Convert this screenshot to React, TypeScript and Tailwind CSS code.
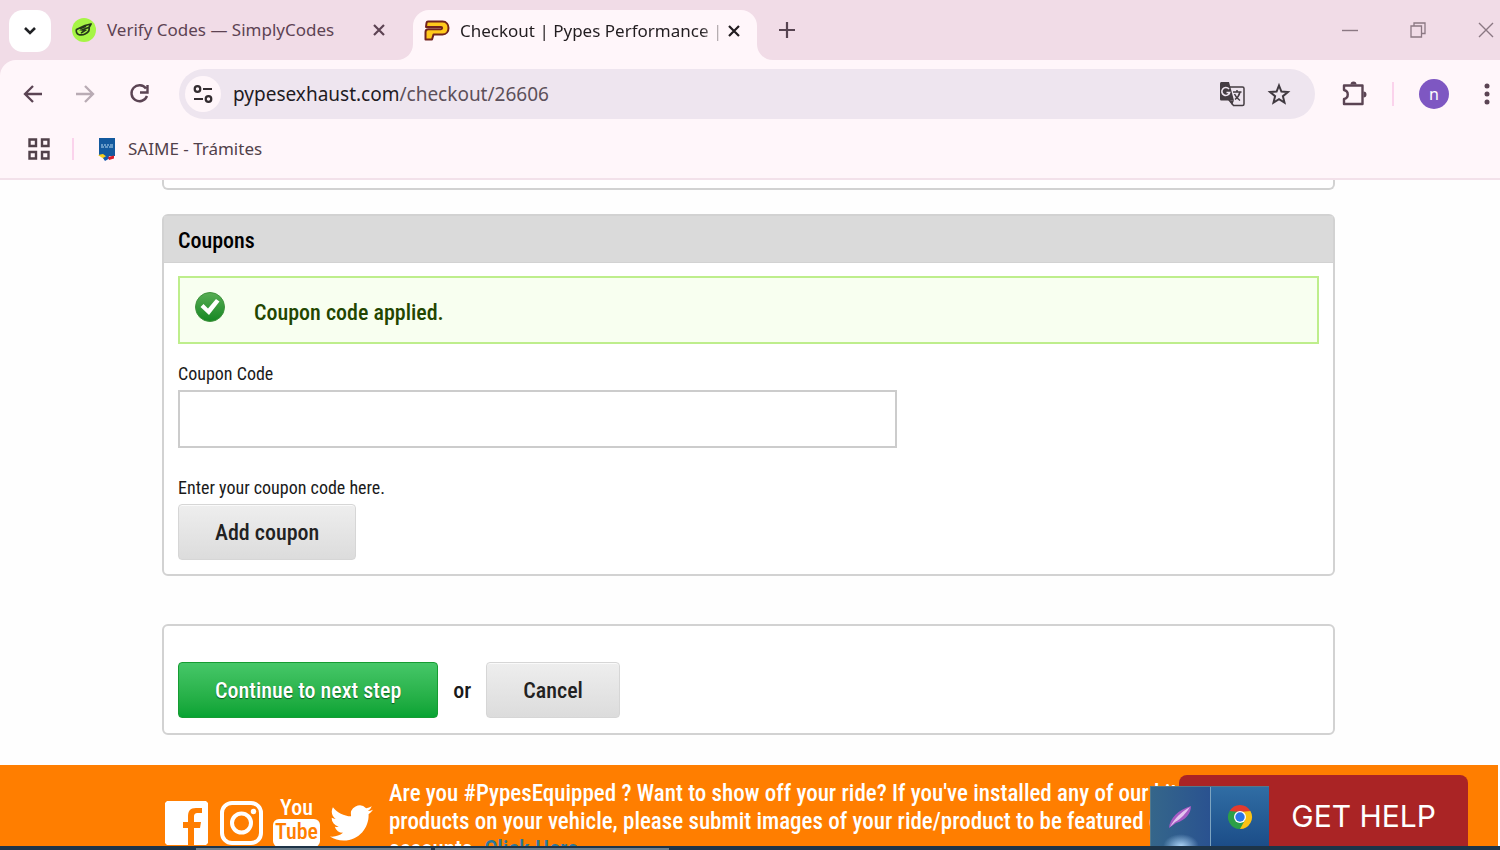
import React from 'react';

const TabCurve: React.FC<{ className: string }> = ({ className }) => (
  <svg className={className} width="16" height="16" viewBox="0 0 16 16" aria-hidden="true">
    <path d="M16 0v16H0C9 16 16 9 16 0z" fill="#fff6fa" />
  </svg>
);

const CloseIcon: React.FC = () => (
  <svg width="14" height="14" viewBox="0 0 14 14" stroke="currentColor" strokeWidth="2.2" fill="none">
    <path d="M2 2l10 10M12 2L2 12" />
  </svg>
);

const TabStrip: React.FC = () => (
  <div className="flex h-15 items-end bg-[#f1dce7] text-[17px]">
    <button aria-label="Search tabs" className="mb-2 ml-[9px] flex h-[42px] w-[42px] shrink-0 items-center justify-center self-end rounded-[14px] bg-white text-[#202124]">
      <svg width="14" height="10" viewBox="0 0 14 10" fill="none" stroke="currentColor" strokeWidth="2.6">
        <path d="M2 2l5 5 5-5" />
      </svg>
    </button>

    <div className="ml-[21px] flex h-[60px] w-[314px] items-center text-[#5d4353]">
      <svg width="24" height="24" viewBox="0 0 24 24" className="shrink-0">
        <circle cx="12" cy="12" r="12" fill="#a6f545" />
        <path d="M4.500 11.500l8.500-4 6-1.500-2 3.500c1 3-1 5-4 6.500-2.500 1.300-5 1-6.500.5-2-1-2.500-3.500-2-5z" fill="none" stroke="#26391a" strokeWidth="1.800" strokeLinejoin="round" />
        <path d="M16.500 9.500L10 12l3 .5-3.500 2.200M8.500 10.500l5-2" fill="none" stroke="#26391a" strokeWidth="1.600" strokeLinecap="round" />
      </svg>
      <span className="ml-[11px] flex-1 whitespace-nowrap">Verify Codes — SimplyCodes</span>
      <button aria-label="Close Verify Codes tab">
        <CloseIcon />
      </button>
    </div>

    <div className="relative ml-[27px] flex h-[50px] w-[344px] items-center rounded-t-2xl bg-[#fff6fa] pr-4 pb-[9px] pl-[11px] text-[#221d20]">
      <TabCurve className="absolute bottom-0 -left-4" />
      <TabCurve className="absolute -right-4 bottom-0 -scale-x-100" />
      <svg width="26" height="21" viewBox="0 0 26 21" className="shrink-0">
        <path d="M4 1.500h14.500C26.500 1.500 26.500 14.500 18.500 14.500H9.500L8 19.500H1.500V12c0-1.800 1-2.800 2.800-2.800H17c1.500 0 1.500-2.200 0-2.200H2l.5-4C2.700 2 3.200 1.500 4 1.500z" fill="#ffc91c" stroke="#71231e" strokeWidth="2" strokeLinejoin="round" />
      </svg>
      <span className="ml-[10px] flex-1 whitespace-nowrap mask-r-from-90%">Checkout | Pypes Performance |</span>
      <button aria-label="Close Checkout tab">
        <CloseIcon />
      </button>
    </div>

    <button aria-label="New tab" className="mb-[22px] ml-[22px] text-[#574451]">
      <svg width="16" height="16" viewBox="0 0 16 16" stroke="currentColor" strokeWidth="2.200">
        <path d="M8 0v16M0 8h16" />
      </svg>
    </button>

    <div className="ml-auto flex h-[60px] items-center gap-[52px] pr-[6px] text-[#8b7883]">
      <button aria-label="Minimize">
        <svg width="16" height="16" viewBox="0 0 16 16" stroke="currentColor" strokeWidth="1.400">
          <path d="M0 8.500h16" />
        </svg>
      </button>
      <button aria-label="Restore">
        <svg width="16" height="16" viewBox="0 0 16 16" fill="none" stroke="currentColor" strokeWidth="1.300">
          <path d="M1 4h10.500v11H1zM4 4V1h11v10.500h-3.500" />
        </svg>
      </button>
      <button aria-label="Close window">
        <svg width="16" height="16" viewBox="0 0 16 16" stroke="currentColor" strokeWidth="1.400">
          <path d="M1 1l14 14M15 1L1 15" />
        </svg>
      </button>
    </div>
  </div>
);

const Toolbar: React.FC = () => (
  <div className="flex items-center pt-[9px] pl-[23px] text-[#5b4453]">
    <button aria-label="Back">
      <svg width="20" height="20" viewBox="0 0 20 20" fill="none" stroke="currentColor" strokeWidth="2.300">
        <path d="M19 10H2.500M10 2l-8 8 8 8" />
      </svg>
    </button>
    <button aria-label="Forward" className="ml-8 text-[#b9abb4]">
      <svg width="20" height="20" viewBox="0 0 20 20" fill="none" stroke="currentColor" strokeWidth="2.300">
        <path d="M1 10h16.500M10 2l8 8-8 8" />
      </svg>
    </button>
    <button aria-label="Reload" className="ml-8">
      <svg width="24" height="24" viewBox="0 0 24 24" fill="none" stroke="currentColor" strokeWidth="2.400">
        <path d="M19 6.500A8 8 0 1 0 20 14M20.500 3v7.500H13" />
      </svg>
    </button>

    <div className="ml-7 flex h-[50px] flex-1 items-center rounded-full bg-[#eee5ef] pr-6 pl-[6px]">
      <button aria-label="Site information" className="flex h-9 w-9 items-center justify-center rounded-full bg-[#fff6fa] text-[#332c30]">
        <svg width="20" height="20" viewBox="0 0 20 20" fill="none" stroke="currentColor" strokeWidth="2.200">
          <circle cx="4.500" cy="5" r="2.800" />
          <path d="M10 5h9M1 15h9" />
          <circle cx="15.500" cy="15" r="2.800" />
        </svg>
      </button>
      <a href="#checkout" className="ml-3 flex-1 text-[19px] text-[#5c505a]">
        <span className="text-[#1f1b1f]">pypesexhaust.com</span>/checkout/26606
      </a>
      <button aria-label="Translate this page" className="text-[#443c42]">
        <svg width="26" height="26" viewBox="0 0 26 26">
          <path d="M10 6h13.500c.8 0 1.500.7 1.500 1.500V23c0 .8-.7 1.500-1.500 1.500h-9L10 19z" fill="#eee5ef" stroke="currentColor" strokeWidth="1.500" />
          <path d="M2.500 1H10l5 18.500H2.500C1.700 19.500 1 19 1 18V2.500C1 1.700 1.700 1 2.500 1z" fill="currentColor" />
          <path d="M10.500 19.500H15L13 24z" fill="currentColor" />
          <path d="M10 8a4 4 0 1 0 .7 3.500H7.500" fill="none" stroke="#eee5ef" strokeWidth="1.600" />
          <path d="M14 11h8.500M18 9v2M21 11c-.8 3.500-3 6-5 7.500M15.500 13c1.200 3 3.500 5 5.500 6.500" fill="none" stroke="currentColor" strokeWidth="1.500" />
        </svg>
      </button>
      <button aria-label="Bookmark this page" className="ml-[22px] text-[#403940]">
        <svg width="24" height="24" viewBox="0 0 24 24" fill="none" stroke="currentColor" strokeWidth="2">
          <path d="M12 3.500l2.400 6 6.500.5-5 4.200 1.600 6.400L12 17.200l-5.500 3.400 1.600-6.400-5-4.200 6.500-.5z" />
        </svg>
      </button>
    </div>

    <button aria-label="Extensions" className="ml-[26px]">
      <svg width="26" height="26" viewBox="0 0 26 26" fill="none" stroke="currentColor" strokeWidth="2.400" strokeLinejoin="round">
        <path d="M3 4.500h18.500V23H3v-5c5-1 5-8 0-9z" />
        <path d="M9.500 3.500a3 3 0 0 1 6 0zM22.500 10.500a3 3 0 0 1 0 6z" fill="currentColor" stroke="none" />
      </svg>
    </button>
    <div className="ml-[25px] h-6 w-[2px] bg-[#fbd3ec]" />
    <button aria-label="Profile n" className="ml-[25px] flex h-[30px] w-[30px] items-center justify-center rounded-full bg-[#7e57c2] text-base leading-none text-white">
      n
    </button>
    <button aria-label="Menu" className="ml-[33px] pr-[10px]">
      <svg width="8" height="22" viewBox="0 0 8 22" fill="currentColor">
        <circle cx="5" cy="3" r="2.500" />
        <circle cx="5" cy="11" r="2.500" />
        <circle cx="5" cy="19" r="2.500" />
      </svg>
    </button>
  </div>
);

const BookmarksBar: React.FC = () => (
  <div className="flex h-[61px] items-center border-b-2 border-[#f3e1ea] pl-7 text-[17px] text-[#51414a]">
    <button aria-label="Apps">
      <svg width="22" height="22" viewBox="0 0 22 22" fill="none" stroke="currentColor" strokeWidth="2.400">
        <path d="M1.500 1.500h6.500v6.500H1.500zM14 1.500h6.500v6.500H14zM1.500 14h6.500v6.500H1.500zM14 14h6.500v6.500H14z" />
      </svg>
    </button>
    <div className="ml-[22px] h-[22px] w-[2px] bg-[#fbd3ec]" />
    <a href="#saime" className="ml-6 flex items-center gap-3">
      <svg width="18" height="24" viewBox="0 0 18 24">
        <path d="M1 1h16v18H1z" fill="#13599e" />
        <path d="M3 8h2M6 8h2M9 8h2M12 8h3M3 10h3M7 10h3M11 10h4" stroke="#b7d9ef" strokeWidth="1.200" />
        <path d="M0 18l5-1 4 3-3 2z" fill="#f5cf1e" />
        <path d="M5 21l5-3 2 3-5 3z" fill="#1558ad" />
        <path d="M10 20l6-1.500v3L11 23z" fill="#d91f2c" />
      </svg>
      SAIME - Trámites
    </a>
  </div>
);

const greyButton =
  'h-14 rounded border border-[#d6d6d6] bg-linear-to-b from-[#eeeeee] to-[#dcdcdc] px-9 text-[22px] font-medium text-[#222222] shadow-[inset_0_1px_0_#fafafa]';

const CouponCard: React.FC = () => (
  <section className="mt-6 rounded-md border-2 border-[#d2d2d2] bg-white">
    <h2 className="border-b border-[#d2d2d2] bg-[#dadada] pt-2 pb-1 pl-[14px] text-[22px] leading-[34px] font-medium text-black">Coupons</h2>
    <div className="px-[14px] pt-[13px] pb-[14px]">
      <div role="status" className="flex h-[68px] items-center border-2 border-[#beee8c] bg-[#f8fff0] pl-[15px] text-[22px] font-medium text-[#234600]">
        <svg width="30" height="30" viewBox="0 0 30 30" className="mb-[6px]">
          <defs>
            <linearGradient id="ok" x1="0" y1="0" x2="0" y2="1">
              <stop offset="0" stopColor="#58ad54" />
              <stop offset="1" stopColor="#158723" />
            </linearGradient>
          </defs>
          <circle cx="15" cy="15" r="14.500" fill="url(#ok)" stroke="#3f923d" />
          <path d="M5.500 15l3-3 4.500 4.500L21 7l3.500 2.500L14 23z" fill="#fff" />
        </svg>
        <span className="ml-[29px] pt-1">Coupon code applied.</span>
      </div>

      <label htmlFor="coupon-code" className="mt-[14px] block text-lg leading-8">
        Coupon Code
      </label>
      <input id="coupon-code" type="text" className="block h-[58px] w-[63%] border-2 border-[#cccccc] bg-white px-3 text-2xl" />
      <p className="mt-6 text-lg leading-8">Enter your coupon code here.</p>
      <button type="button" className={greyButton}>
        Add coupon
      </button>
    </div>
  </section>
);

const NextStepCard: React.FC = () => (
  <section className="mt-12 flex items-center rounded-md border-2 border-[#d2d2d2] bg-white px-[14px] pt-9 pb-[15px] text-[22px] font-medium">
    <button type="submit" className="h-14 rounded border border-[#169c32] bg-linear-to-b from-[#45c768] to-[#06a333] px-9 text-[22px] font-medium text-white text-shadow-[0_1px_1px_#0b5c20]">
      Continue to next step
    </button>
    <span className="mx-[15px]">or</span>
    <button type="button" className={greyButton}>
      Cancel
    </button>
  </section>
);

const SocialLinks: React.FC = () => (
  <div className="flex gap-3 pt-[36px] text-white">
    <a href="#facebook" aria-label="Facebook">
      <svg width="43" height="44" viewBox="0 0 43 44">
        <path d="M2 0h39l2 2v40l-2 2H29V27h6l1-6h-7v-5c0-3 1-4 4-4h4V7h-6c-6 0-8 3-8 9v5h-5v6h5v17H2l-2-2V2z" fill="currentColor" />
      </svg>
    </a>
    <a href="#instagram" aria-label="Instagram">
      <svg width="43" height="44" viewBox="0 0 43 44" fill="none" stroke="currentColor" strokeWidth="4">
        <rect x="2" y="2" width="39" height="40" rx="10" />
        <circle cx="21.500" cy="22" r="9.500" />
        <circle cx="33.500" cy="10.500" r="2.700" fill="currentColor" stroke="none" />
      </svg>
    </a>
    <a href="#youtube" aria-label="YouTube" className="-mt-1 flex w-[43px] flex-col items-center text-[22px] leading-[22px] font-medium">
      <span>You</span>
      <span className="rounded-md bg-white px-[2px] pt-[2px] pb-1 text-[#ff7e00]">Tube</span>
    </a>
    <a href="#twitter" aria-label="Twitter">
      <svg width="43" height="44" viewBox="0 0 24 24">
        <path
          d="M23.950 4.570a10 10 0 0 1-2.820.770 4.960 4.960 0 0 0 2.160-2.720c-.950.550-2 .950-3.130 1.180a4.920 4.920 0 0 0-8.380 4.480C7.690 8.100 4.070 6.130 1.640 3.160a4.820 4.820 0 0 0-.670 2.480c0 1.710.870 3.210 2.190 4.100a4.900 4.900 0 0 1-2.230-.620v.060a4.920 4.920 0 0 0 3.950 4.830 5 5 0 0 1-2.210.080 4.940 4.940 0 0 0 4.600 3.420A9.870 9.870 0 0 1 0 19.540a14 14 0 0 0 7.550 2.210c9.050 0 14-7.500 14-13.980 0-.210 0-.420-.020-.630a9.940 9.940 0 0 0 2.460-2.550z"
          fill="currentColor"
        />
      </svg>
    </a>
  </div>
);

const Footer: React.FC = () => (
  <footer className="mr-[2px] mt-[30px] flex bg-[#ff7e00] pl-[11%] text-white">
    <SocialLinks />
    <p className="ml-4 pt-[15px] text-[23px] leading-7 font-medium whitespace-nowrap">
      Are you #PypesEquipped ? Want to show off your ride? If you've installed any of our kits
      <br />
      products on your vehicle, please submit images of your ride/product to be featured on
      <br />
      accounts. <a href="#submit" className="text-[#2b789e]">Click Here</a>
    </p>
  </footer>
);

// Peek of the desktop taskbar that floats over the lower right of the page
const TaskbarPreview: React.FC = () => (
  <div className="absolute right-[231px] bottom-1 flex h-[60px] w-[119px] border-t border-l border-[#54788b]">
    <div className="flex flex-1 items-center justify-center border-r border-[#7da4c0] bg-linear-to-r from-[#35668a] to-[#2a5290]">
      <svg width="24" height="24" viewBox="0 0 24 24">
        <path d="M1 23C2 13 10 5 23 1c0 7-5 14-15 17z" fill="#a55bc4" />
        <path d="M2 22C7 13 13 7 22 2c-4 6-9 12-15 15" fill="#e4c4ef" />
      </svg>
      <div className="absolute bottom-0 left-3 h-3 w-9 bg-[radial-gradient(ellipse_at_bottom,#a9d2f5_0%,transparent_70%)]" />
    </div>
    <div className="flex flex-1 items-center justify-center bg-linear-to-b from-[#306da4] to-[#1c4d88]">
      <svg width="26" height="26" viewBox="0 0 26 26">
        <path d="M13 13L2.600 7A12 12 0 0 1 23.400 7z" fill="#e33b2e" />
        <path d="M13 13L23.400 7A12 12 0 0 1 13 25z" fill="#fbc116" />
        <path d="M13 13L13 25A12 12 0 0 1 2.600 7z" fill="#2c9f48" />
        <path d="M13 7h10.400L18 16z" fill="#fbc116" />
        <path d="M2.600 7L8 16l5-3V7z" fill="#2c9f48" />
        <path d="M2.600 7h20.800L13 8z" fill="#e33b2e" />
        <path d="M8 16l5 9 5-9z" fill="#2c9f48" />
        <circle cx="13" cy="13" r="6" fill="#fff" />
        <circle cx="13" cy="13" r="4.700" fill="#2d74e8" />
      </svg>
    </div>
  </div>
);

const App: React.FC = () => {
  return (
    <div className="relative flex h-screen flex-col overflow-hidden bg-[#fefefe] font-['Roboto_Condensed','Liberation_Sans',sans-serif] text-[#1a1a1a]">
      <header className="shrink-0 bg-[#f1dce7] font-['Noto_Sans',sans-serif]">
        <TabStrip />
        <div className="rounded-tl-2xl bg-[#fff6fa]">
          <Toolbar />
          <BookmarksBar />
        </div>
      </header>

      <main className="min-h-0 flex-1 overflow-hidden">
        <div className="mr-[11%] ml-[162px]">
          <div className="h-[10px] rounded-b-md border-2 border-t-0 border-[#d2d2d2] bg-white" />
          <CouponCard />
          <NextStepCard />
        </div>
        <Footer />
      </main>

      <button type="button" className="absolute right-8 bottom-1 h-[71px] w-[289px] rounded-t-lg bg-[#aa2425] pt-3 pr-8 text-right font-['Inter',sans-serif] text-[30px] text-white">
        GET HELP
      </button>
      <TaskbarPreview />

      <div className="flex h-1 shrink-0 bg-[#1d3448] pl-[196px]">
        <div className="mt-[2px] w-[235px] bg-[#6d7f8c]" />
        <div className="mt-[2px] ml-1 w-[234px] bg-[#6d7f8c]" />
      </div>
    </div>
  );
};

export default App;
